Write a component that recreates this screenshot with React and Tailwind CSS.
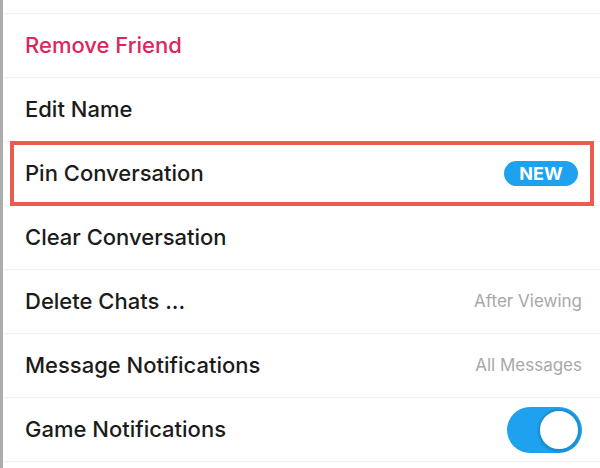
const rows = [
  { label: 'Remove Friend', danger: true },
  { label: 'Edit Name' },
  { label: 'Pin Conversation', badge: 'NEW', highlight: true },
  { label: 'Clear Conversation' },
  { label: 'Delete Chats ...', value: 'After Viewing' },
  { label: 'Message Notifications', value: 'All Messages' },
  { label: 'Game Notifications', toggle: true },
];

const Toggle = ({ on }) => (
  <div className="w-[75px] h-[46px] rounded-full bg-[#1ea1ee] flex items-center justify-end p-[2px]">
    <div className="w-[42px] h-[42px] rounded-full bg-white border-2 border-[#1a8fd6] shadow-sm"></div>
  </div>
);

export default function App() {
  return (
    <div
      className="w-[600px] h-[468px] bg-white overflow-hidden border-l-[3px] border-[#adadad]"
      style={{ fontFamily: 'Inter, "Open Sans", sans-serif' }}
    >
      <div className="h-[14px] border-b border-[#f1f1f1]"></div>
      {rows.map((row) => (
        <div
          key={row.label}
          className="relative h-[64px] border-b border-[#f1f1f1] flex items-center justify-between pl-[22px] pr-[18px]"
        >
          {row.highlight && (
            <div className="absolute left-[7px] right-[6px] top-[-1px] bottom-[-1px] border-4 border-[#ec5b4f]"></div>
          )}
          <span
            className={`text-[22px] font-medium leading-none pb-[2px] ${
              row.danger ? 'text-[#e0245e]' : 'text-[#1b1b1b]'
            }`}
          >
            {row.label}
          </span>
          {row.badge && (
            <span className="relative mr-[4px] w-[74px] h-[25px] rounded-full bg-[#1ea1ee] text-white text-[18px] font-bold flex items-center justify-center">
              {row.badge}
            </span>
          )}
          {row.value && (
            <span className="text-[17px] text-[#a8a8a8]">{row.value}</span>
          )}
          {row.toggle && <Toggle on />}
        </div>
      ))}
    </div>
  );
}
